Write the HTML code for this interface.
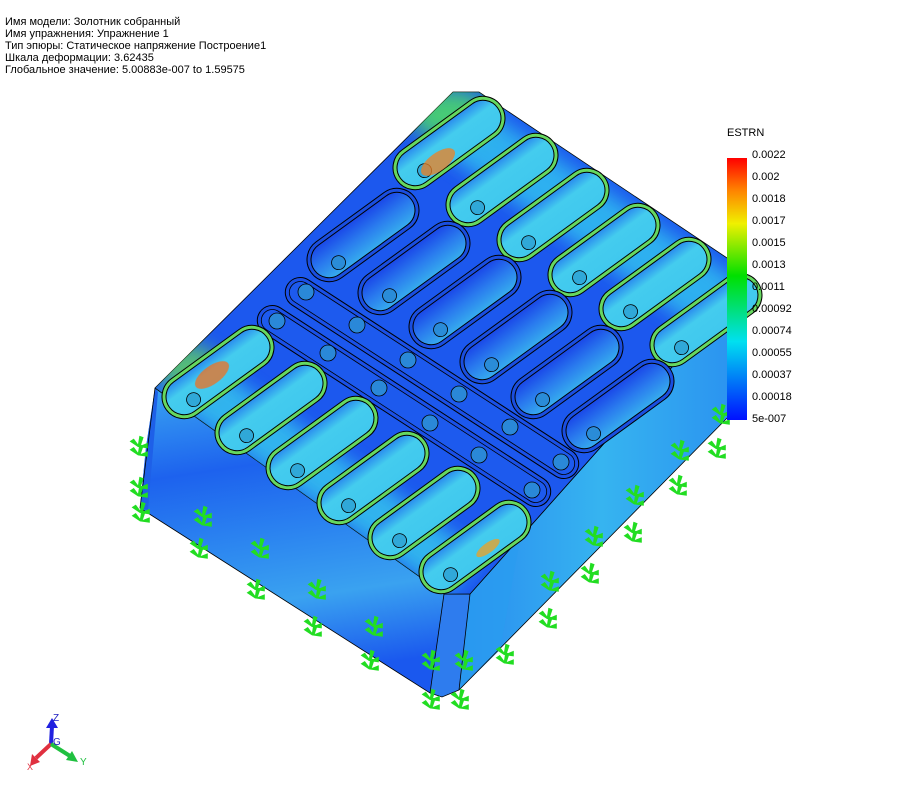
<!DOCTYPE html>
<html><head><meta charset="utf-8"><style>
html,body{margin:0;padding:0;background:#fff;width:909px;height:794px;overflow:hidden}
.t{position:absolute;left:5px;font:11px "Liberation Sans",sans-serif;color:#000;line-height:12px;white-space:nowrap}
</style></head><body>
<div class="t" style="top:16px">Имя модели: Золотник собранный<br>Имя упражнения: Упражнение 1<br>Тип эпюры: Статическое напряжение Построение1<br>Шкала деформации: 3.62435<br>Глобальное значение: 5.00883e-007 to 1.59575</div>
<svg width="909" height="794" style="position:absolute;left:0;top:0" xmlns="http://www.w3.org/2000/svg">
<defs>
<linearGradient id="lf" x1="0" y1="0" x2="0.15" y2="1">
<stop offset="0" stop-color="#3aa6f2"/><stop offset="0.3" stop-color="#1d62ee"/><stop offset="0.55" stop-color="#2c86f0"/><stop offset="0.75" stop-color="#3aa2f0"/><stop offset="1" stop-color="#1a58ee"/></linearGradient>
<linearGradient id="rf" x1="0" y1="0" x2="1" y2="0">
<stop offset="0" stop-color="#2a8cf0"/><stop offset="0.5" stop-color="#36b4f0"/><stop offset="1" stop-color="#2a90f0"/></linearGradient>
<linearGradient id="leg" x1="0" y1="0" x2="0" y2="1">
<stop offset="0" stop-color="#ff0000"/><stop offset="0.12" stop-color="#ff8000"/><stop offset="0.25" stop-color="#f0f000"/><stop offset="0.45" stop-color="#00e000"/><stop offset="0.7" stop-color="#00e0f0"/><stop offset="1" stop-color="#0010ff"/></linearGradient>
<linearGradient id="sin" x1="0" y1="0" x2="0" y2="1">
<stop offset="0" stop-color="#2a8cee"/><stop offset="0.35" stop-color="#44ccee"/><stop offset="1" stop-color="#40c8ee"/></linearGradient>
<linearGradient id="sin2" x1="0" y1="0" x2="0" y2="1">
<stop offset="0" stop-color="#1a48e8"/><stop offset="0.5" stop-color="#2a7cee"/><stop offset="1" stop-color="#36acee"/></linearGradient>
<clipPath id="topc"><polygon points="155,388 453,92 479,92 745,270 745,285 470,594 444,594"/></clipPath>
<filter id="bl"><feGaussianBlur stdDeviation="10"/></filter>
<g id="slotG"><rect x="-64" y="-22" width="128" height="44" rx="22" fill="#66d860" stroke="#000" stroke-width="1"/><rect x="-60" y="-18" width="120" height="36" rx="18" fill="url(#sin)" stroke="#000" stroke-width="1"/><circle cx="-36" cy="8" r="7" fill="#30a8d8" stroke="#000" stroke-width="0.8"/></g>
<g id="slotB"><rect x="-64" y="-22" width="128" height="44" rx="22" fill="#1a4ee0" stroke="#000" stroke-width="1"/><rect x="-60" y="-18" width="120" height="36" rx="18" fill="url(#sin2)" stroke="#000" stroke-width="1"/><circle cx="-36" cy="8" r="7" fill="#2a8cd8" stroke="#000" stroke-width="0.8"/></g>
<g id="ar" transform="scale(1.4)"><path d="M0 0 L-6 -4 L-3 -6 L0 -2 L1 -8 L4 -7 L2 -1 L7 -3 L7 1 Z" fill="#22dd22"/><path d="M0 6 L-6 2 L-3 0 L0 4 L1 -2 L4 -1 L2 5 L7 3 L7 7 Z" fill="#22dd22"/></g>
</defs>
<!-- left face -->
<polygon points="155,388 444,594 430,693 140,508 146,447" fill="url(#lf)"/>
<polygon points="155,388 146,447 140,508 148,510 158,392" fill="#1e60e8"/>
<polygon points="444,594 470,594 459,690 442,697 430,693" fill="#2e7cee"/>
<polygon points="470,594 745,285 735,410 459,690" fill="url(#rf)"/>
<polygon points="470,594 520,540 500,650 459,690" fill="#2a9cf0" opacity="0.7"/>
<polyline points="155,388 444,594 430,693 140,508 155,388" fill="none" stroke="#000" stroke-width="0.8"/>
<polyline points="444,594 470,594 459,690 442,697 430,693" fill="none" stroke="#000" stroke-width="0.8"/>
<polyline points="470,594 745,285" fill="none" stroke="#000" stroke-width="0.8"/>
<polyline points="459,690 735,410" fill="none" stroke="#000" stroke-width="0.8"/>
<!-- top face -->
<polygon points="155,388 453,92 479,92 745,270 745,285 470,594 444,594" fill="#1c58ee" stroke="#000" stroke-width="0.8"/>
<g clip-path="url(#topc)"><g opacity="0.85" filter="url(#bl)">
<polygon points="470,100 745,285 700,330 440,150" fill="#30c0f0"/>
<polygon points="160,395 445,595 480,555 200,355" fill="#34c4ee"/>
<ellipse cx="450" cy="115" rx="40" ry="25" fill="#50e060"/>
<ellipse cx="190" cy="370" rx="30" ry="25" fill="#60d060"/>
</g></g>
<g transform="translate(449,143) rotate(-36)"><use href="#slotG"/></g>
<g transform="translate(502,180) rotate(-36)"><use href="#slotG"/></g>
<g transform="translate(553,215) rotate(-36)"><use href="#slotG"/></g>
<g transform="translate(604,250) rotate(-36)"><use href="#slotG"/></g>
<g transform="translate(655,284) rotate(-36)"><use href="#slotG"/></g>
<g transform="translate(706,320) rotate(-36)"><use href="#slotG"/></g>
<g transform="translate(363,235) rotate(-36)"><use href="#slotB"/></g>
<g transform="translate(414,268) rotate(-36)"><use href="#slotB"/></g>
<g transform="translate(465,302) rotate(-36)"><use href="#slotB"/></g>
<g transform="translate(516,337) rotate(-36)"><use href="#slotB"/></g>
<g transform="translate(567,372) rotate(-36)"><use href="#slotB"/></g>
<g transform="translate(618,406) rotate(-36)"><use href="#slotB"/></g>
<g transform="translate(432,378) rotate(33)"><rect x="-172" y="-15" width="344" height="30" rx="15" fill="#1a50e8" stroke="#000"/><rect x="-168" y="-11" width="336" height="22" rx="11" fill="#1d5aee" stroke="#000" stroke-width="0.8"/></g>
<g transform="translate(404,406) rotate(33)"><rect x="-172" y="-15" width="344" height="30" rx="15" fill="#1a50e8" stroke="#000"/><rect x="-168" y="-11" width="336" height="22" rx="11" fill="#1d5aee" stroke="#000" stroke-width="0.8"/></g>
<g fill="#2a88d8" stroke="#000" stroke-width="0.8">
<circle cx="306" cy="292" r="8"/><circle cx="357" cy="325" r="8"/><circle cx="408" cy="360" r="8"/><circle cx="459" cy="394" r="8"/><circle cx="510" cy="427" r="8"/><circle cx="561" cy="462" r="8"/>
<circle cx="277" cy="321" r="8"/><circle cx="328" cy="353" r="8"/><circle cx="379" cy="388" r="8"/><circle cx="430" cy="423" r="8"/><circle cx="479" cy="455" r="8"/><circle cx="532" cy="490" r="8"/>
</g>
<g transform="translate(218,372) rotate(-36)"><use href="#slotG"/></g>
<g transform="translate(271,408) rotate(-36)"><use href="#slotG"/></g>
<g transform="translate(322,443) rotate(-36)"><use href="#slotG"/></g>
<g transform="translate(373,478) rotate(-36)"><use href="#slotG"/></g>
<g transform="translate(424,513) rotate(-36)"><use href="#slotG"/></g>
<g transform="translate(475,547) rotate(-36)"><use href="#slotG"/></g>
<g opacity="0.75">
<ellipse cx="438" cy="162" rx="20" ry="9" fill="#f08020" transform="rotate(-36 438 162)"/>
<ellipse cx="212" cy="375" rx="20" ry="9" fill="#f07020" transform="rotate(-36 212 375)"/>
<ellipse cx="488" cy="548" rx="14" ry="5" fill="#f0a020" transform="rotate(-36 488 548)"/>
</g>
<g>
<use href="#ar" x="138" y="447"/><use href="#ar" x="138" y="488"/><use href="#ar" x="140" y="513"/><use href="#ar" x="202" y="517"/><use href="#ar" x="198" y="549"/><use href="#ar" x="259" y="549"/><use href="#ar" x="255" y="590"/><use href="#ar" x="316" y="590"/><use href="#ar" x="312" y="627"/><use href="#ar" x="373" y="627"/><use href="#ar" x="369" y="661"/><use href="#ar" x="430" y="661"/><use href="#ar" x="430" y="700"/><use href="#ar" x="463" y="661"/><use href="#ar" x="459" y="700"/><use href="#ar" x="504" y="655"/><use href="#ar" x="547" y="619"/><use href="#ar" x="549" y="582"/><use href="#ar" x="589" y="574"/><use href="#ar" x="593" y="537"/><use href="#ar" x="632" y="533"/><use href="#ar" x="634" y="496"/><use href="#ar" x="677" y="486"/><use href="#ar" x="679" y="451"/><use href="#ar" x="716" y="449"/><use href="#ar" x="720" y="415"/>
</g>
<rect x="727" y="158" width="20" height="262" fill="url(#leg)"/>
<text x="727" y="136" font-family="Liberation Sans,sans-serif" font-size="11">ESTRN</text>
<g font-family="Liberation Sans,sans-serif" font-size="11" fill="#000">
<text x="752" y="158">0.0022</text><text x="752" y="180">0.002</text><text x="752" y="202">0.0018</text><text x="752" y="224">0.0017</text><text x="752" y="246">0.0015</text><text x="752" y="268">0.0013</text><text x="752" y="290">0.0011</text><text x="752" y="312">0.00092</text><text x="752" y="334">0.00074</text><text x="752" y="356">0.00055</text><text x="752" y="378">0.00037</text><text x="752" y="400">0.00018</text><text x="752" y="422">5e-007</text>
</g>
<line x1="51" y1="744" x2="52" y2="726" stroke="#2020e0" stroke-width="4"/><polygon points="46,728 58,728 52,718" fill="#2020e0"/>
<line x1="51" y1="744" x2="36" y2="758" stroke="#e03040" stroke-width="4"/><polygon points="30,766 32,754 40,762" fill="#e03040"/>
<line x1="51" y1="744" x2="70" y2="756" stroke="#20c040" stroke-width="4"/><polygon points="78,762 66,760 72,751" fill="#20c040"/>
<text x="53" y="721" font-family="Liberation Sans,sans-serif" font-size="10" fill="#2020c0">Z</text>
<text x="53" y="745" font-family="Liberation Sans,sans-serif" font-size="10" fill="#2020c0">G</text>
<text x="80" y="765" font-family="Liberation Sans,sans-serif" font-size="10" fill="#20c040">Y</text>
<text x="27" y="770" font-family="Liberation Sans,sans-serif" font-size="9" fill="#e03040">X</text>
</svg>
</body></html>
